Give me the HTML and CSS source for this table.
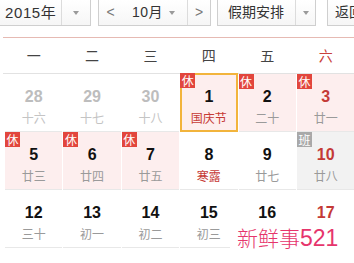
FILE: index.html
```html
<!DOCTYPE html>
<html lang="zh-CN">
<head>
<meta charset="utf-8">
<link rel="stylesheet" href="styles.css">
</head>
<body>
<div class="toolbar">
  <div class="sel year"><span class="val">2015年</span><span class="arr"><i class="tri"></i></span></div>
  <div class="monthgrp">
    <span class="nav prev">&lt;</span>
    <span class="mval">10月</span><span class="marr"><i class="tri"></i></span>
    <span class="nav next">&gt;</span>
  </div>
  <div class="sel hol"><span class="val">假期安排</span><span class="arr"><i class="tri"></i></span></div>
  <div class="btn">返回今天</div>
</div>
<div class="redline"></div>
<div class="weekhead">
  <span>一</span><span>二</span><span>三</span><span>四</span><span>五</span><span class="we">六</span><span class="we">日</span>
</div>
<div class="grid">
  <div class="cell other"><div class="num">28</div><div class="lun">十六</div></div>
  <div class="cell other"><div class="num">29</div><div class="lun">十七</div></div>
  <div class="cell other"><div class="num">30</div><div class="lun">十八</div></div>
  <div class="cell rest today"><span class="badge">休</span><div class="num">1</div><div class="lun fest">国庆节</div></div>
  <div class="cell rest"><span class="badge">休</span><div class="num">2</div><div class="lun">二十</div></div>
  <div class="cell rest"><span class="badge">休</span><div class="num red">3</div><div class="lun">廿一</div></div>
  <div class="cell rest"><span class="badge">休</span><div class="num red">4</div><div class="lun">廿二</div></div>

  <div class="cell rest"><span class="badge">休</span><div class="num">5</div><div class="lun">廿三</div></div>
  <div class="cell rest"><span class="badge">休</span><div class="num">6</div><div class="lun">廿四</div></div>
  <div class="cell rest"><span class="badge">休</span><div class="num">7</div><div class="lun">廿五</div></div>
  <div class="cell"><div class="num">8</div><div class="lun fest">寒露</div></div>
  <div class="cell"><div class="num">9</div><div class="lun">廿七</div></div>
  <div class="cell work"><span class="badge gray">班</span><div class="num red">10</div><div class="lun">廿八</div></div>
  <div class="cell"><div class="num red">11</div><div class="lun">廿九</div></div>

  <div class="cell"><div class="num">12</div><div class="lun">三十</div></div>
  <div class="cell"><div class="num">13</div><div class="lun">初一</div></div>
  <div class="cell"><div class="num">14</div><div class="lun">初二</div></div>
  <div class="cell"><div class="num">15</div><div class="lun">初三</div></div>
  <div class="cell"><div class="num">16</div><div class="lun">初四</div></div>
  <div class="cell"><div class="num red">17</div><div class="lun">初五</div></div>
  <div class="cell"><div class="num red">18</div><div class="lun">初六</div></div>

  <div class="cell"><div class="num">19</div><div class="lun">初七</div></div>
  <div class="cell"><div class="num">20</div><div class="lun">初八</div></div>
  <div class="cell"><div class="num">21</div><div class="lun fest">重阳节</div></div>
  <div class="cell"><div class="num">22</div><div class="lun">初十</div></div>
  <div class="cell"><div class="num">23</div><div class="lun">十一</div></div>
  <div class="cell"><div class="num red">24</div><div class="lun">十二</div></div>
  <div class="cell"><div class="num red">25</div><div class="lun">十三</div></div>
</div>
<div class="mark"><span class="mk-cn">新鲜事</span><span class="mk-num">521</span></div>
</body>
</html>
```
FILE: styles.css
```css
html, body {
  margin: 0;
  padding: 0;
  overflow: hidden;
  background: #fff;
}
body {
  width: 354px;
  height: 263px;
  position: relative;
  font-family: "Liberation Sans", "Noto Sans CJK SC", sans-serif;
  color: #333;
}

/* toolbar */
.toolbar {
  display: flex;
  align-items: flex-start;
  margin-top: -1px;
  margin-left: -2px;
  height: 27px;
  white-space: nowrap;
}
.sel, .monthgrp, .btn {
  display: flex;
  height: 27px;
  box-sizing: border-box;
  border: 1px solid #cfcfcf;
  background: linear-gradient(#ffffff, #f6f6f6);
  font-size: 14px;
  line-height: 25px;
  color: #333;
}
.val {
  border-right: 1px solid #dcdcdc;
}
.arr, .marr {
  display: flex;
  align-items: center;
  justify-content: center;
}
.tri {
  display: block;
  width: 0;
  height: 0;
  border-left: 3.5px solid transparent;
  border-right: 3.5px solid transparent;
  border-top: 4px solid #9a9a9a;
}
.year .val {
  width: 63px;
  box-sizing: border-box;
  padding-left: 6px;
  font-size: 15px;
  letter-spacing: 0.6px;
}
.year .arr {
  width: 28px;
}
.monthgrp {
  margin-left: 7px;
}
.nav {
  width: 23px;
  text-align: center;
  color: #777;
  font-size: 14px;
}
.mval {
  width: 41px;
  box-sizing: border-box;
  padding-left: 10px;
  letter-spacing: 0.5px;
}
.marr {
  width: 24px;
  justify-content: flex-start;
  padding-left: 6px;
  box-sizing: border-box;
}
.next {
  border-left: 1px solid #dcdcdc;
  width: 22px;
}
.hol {
  margin-left: 6px;
}
.hol .val {
  width: 78px;
  box-sizing: border-box;
  padding-left: 10px;
}
.hol .arr {
  width: 19px;
}
.btn {
  margin-left: 11px;
  padding: 0 7px;
}

.redline {
  margin-top: 11px;
  margin-left: 3px;
  height: 1px;
  background: #e6bab3;
}

/* week header */
.weekhead {
  display: grid;
  grid-template-columns: repeat(7, 57.4px);
  column-gap: 1px;
  margin-left: 3px;
  padding-left: 2px;
  height: 35px;
  line-height: 35px;
  border-bottom: 1px solid #e2e2e2;
  font-family: "Noto Sans CJK SC", sans-serif;
  font-size: 14px;
  color: #444;
  text-align: center;
}
.weekhead .we {
  color: #c9413b;
}

/* grid */
.grid {
  display: grid;
  grid-template-columns: repeat(7, 57.4px);
  grid-auto-rows: 58px;
  column-gap: 1px;
  margin-left: 5px;
}
.cell {
  position: relative;
  box-sizing: border-box;
  border-bottom: 1px solid #e8e8e8;
  text-align: center;
  padding-top: 14px;
}
.num {
  font-size: 16px;
  font-weight: bold;
  line-height: 18px;
  color: #111;
}
.num.red {
  color: #c43a36;
}
.lun {
  margin-top: 5px;
  font-family: "Noto Sans CJK SC", sans-serif;
  font-size: 12px;
  line-height: 14px;
  color: #9a9a9a;
}
.lun.fest {
  color: #c63a36;
}
.other .num {
  color: #bdbdbd;
}
.other .lun {
  color: #c4c4c4;
}
.rest {
  background: #fdeeee;
}
.work {
  background: #f2f2f2;
}
.today {
  border: 2px solid #f2b43c;
  margin-top: -1px;
  padding-top: 13px;
}
.today .badge {
  top: -2px;
  left: -2px;
}
.badge {
  position: absolute;
  top: 0;
  left: 0;
  width: 15px;
  height: 15px;
  background: #e2463d;
  color: #fff;
  font-family: "Noto Sans CJK SC", sans-serif;
  font-size: 12px;
  line-height: 15px;
  text-align: center;
}
.badge.gray {
  background: #a9a9a9;
}

/* watermark */
.mark {
  position: absolute;
  left: 230px;
  top: 223px;
  width: 124px;
  height: 28px;
  box-sizing: border-box;
  padding-left: 7px;
  background: #fff;
  color: #e6356c;
  line-height: 28px;
  white-space: nowrap;
}
.mk-cn {
  font-family: "Noto Sans CJK SC", sans-serif;
  font-weight: 300;
  font-size: 21px;
}
.mk-num {
  font-family: "Liberation Sans", sans-serif;
  font-size: 23px;
}
```
